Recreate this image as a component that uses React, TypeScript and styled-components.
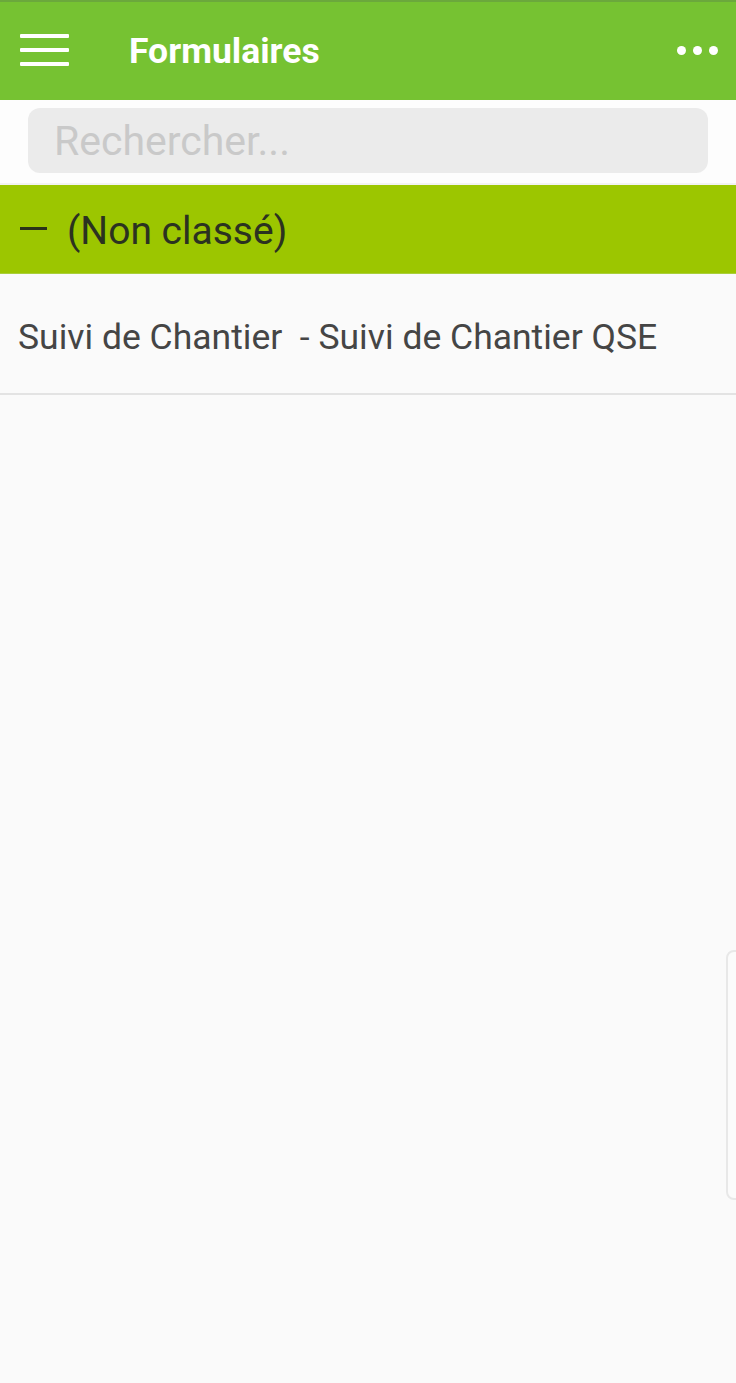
import styled, { createGlobalStyle } from 'styled-components'

const GlobalStyle = createGlobalStyle`
  html, body {
    margin: 0;
    padding: 0;
    background: #fafafa;
    font-family: Roboto, "Noto Sans", Arial, sans-serif;
  }
  #root {
    min-height: 100vh;
  }
`

const Page = styled.div`
  min-height: 1383px;
  background: #fafafa;
  position: relative;
  overflow: hidden;
`

const Toolbar = styled.header`
  height: 100px;
  background: #76c232;
  border-top: 2px solid #6ba83c;
  display: flex;
  align-items: center;
  padding: 0 18px 0 20px;
  box-sizing: border-box;
`

const MenuButton = styled.button`
  width: 49px;
  height: 32px;
  padding: 0;
  border: none;
  background: transparent;
  display: flex;
  flex-direction: column;
  justify-content: space-between;
  margin-right: 60px;
  margin-top: -3px;

  span {
    display: block;
    height: 4px;
    background: #fff;
    border-radius: 1px;
  }
`

const Title = styled.h1`
  flex: 1;
  margin: 0;
  color: #fff;
  font-size: 35.5px;
  font-weight: 700;
`

const MoreButton = styled.button`
  border: none;
  background: transparent;
  display: flex;
  gap: 7px;
  padding: 0;
  margin-top: -2px;

  span {
    width: 9px;
    height: 9px;
    border-radius: 50%;
    background: #fff;
  }
`

const SearchBar = styled.div`
  background: #fdfdfd;
  padding: 8px 28px 10px 28px;
  border-bottom: 2px solid #f2f2f2;
`

const SearchInput = styled.input`
  width: 100%;
  height: 65px;
  box-sizing: border-box;
  border: none;
  border-radius: 12px;
  background: #ebebeb;
  padding: 0 26px;
  font-family: Roboto, Arial, sans-serif;
  font-size: 41px;
  color: #333;
  outline: none;

  &::placeholder {
    color: #c9c9c9;
  }
`

const GroupHeader = styled.div`
  height: 89px;
  background: #9cc600;
  display: flex;
  align-items: center;
  padding-left: 20px;
  padding-top: 3px;
  box-sizing: border-box;
  color: #2b3220;
  font-size: 39px;
  border-bottom: 1px solid #a9cf3a;
`

const Minus = styled.span`
  display: inline-block;
  width: 27px;
  height: 3px;
  background: #2a3318;
  margin-right: 20px;
  margin-top: -5px;
`

const ItemRow = styled.div`
  height: 121px;
  display: flex;
  align-items: center;
  padding-left: 18px;
  padding-top: 6px;
  box-sizing: border-box;
  border-bottom: 2px solid #e3e3e3;
  color: #454545;
  font-size: 35.5px;
  white-space: pre;
`

const DrawerHandle = styled.div`
  position: absolute;
  right: -10px;
  top: 950px;
  width: 16px;
  height: 246px;
  border: 2px solid #e8e8e8;
  border-radius: 8px;
  background: #fbfbfb;
`

export default function App() {
  return (
    <>
      <GlobalStyle />
      <Page>
        <Toolbar>
          <MenuButton aria-label="Menu">
            <span />
            <span />
            <span />
          </MenuButton>
          <Title>Formulaires</Title>
          <MoreButton aria-label="Plus">
            <span />
            <span />
            <span />
          </MoreButton>
        </Toolbar>
        <SearchBar>
          <SearchInput placeholder="Rechercher..." />
        </SearchBar>
        <GroupHeader>
          <Minus />
          (Non classé)
        </GroupHeader>
        <ItemRow>{'Suivi de Chantier  - Suivi de Chantier QSE'}</ItemRow>
        <DrawerHandle />
      </Page>
    </>
  )
}
